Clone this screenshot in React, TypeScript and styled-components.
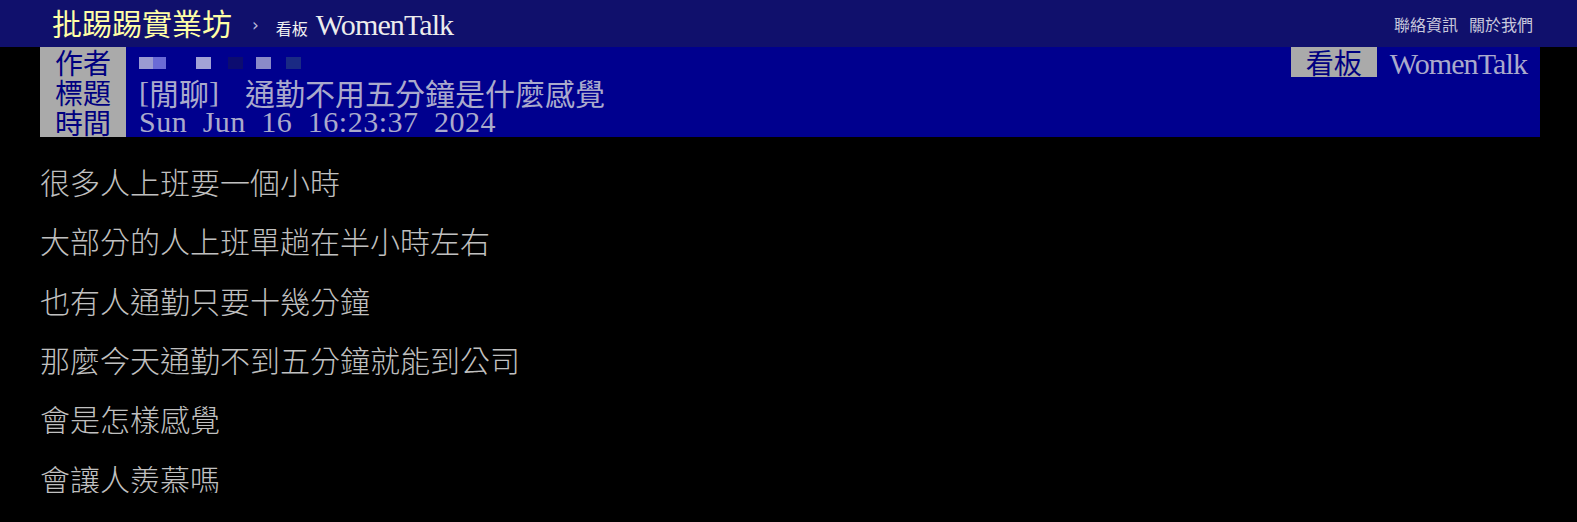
import styled, { createGlobalStyle } from "styled-components";

const CJK = `"Noto Sans CJK TC", "Noto Sans CJK SC", sans-serif`;
const SERIF = `"Liberation Serif", "Noto Sans CJK TC", serif`;

const GlobalStyle = createGlobalStyle`
  html, body {
    margin: 0;
    padding: 0;
    background: #000;
  }
  body {
    font-family: ${CJK};
  }
`;

const lines = [
  "很多人上班要一個小時",
  "大部分的人上班單趟在半小時左右",
  "也有人通勤只要十幾分鐘",
  "那麼今天通勤不到五分鐘就能到公司",
  "會是怎樣感覺",
  "會讓人羨慕嗎",
];

// mosaic over the author id
const blur = [
  { w: 14, c: "#9a9ad2", gap: 0 },
  { w: 13, c: "#6a6ad6", gap: 0 },
  { w: 15, c: "#a2a2d6", gap: 30 },
  { w: 15, c: "#0c0c70", gap: 17 },
  { w: 15, c: "#8a8ac8", gap: 13 },
  { w: 15, c: "#1a2a84", gap: 15 },
];

const App = () => {
  return (
    <>
      <GlobalStyle />
      <TopBar>
        <Brand>
          <Logo>批踢踢實業坊</Logo>
          <Arrow>›</Arrow>
          <BoardLabel>看板</BoardLabel>
          <Latin $size={30} $track={-0.9} $color="#ececec">WomenTalk</Latin>
        </Brand>
        <Links>
          <LinkItem>聯絡資訊</LinkItem>
          <LinkItem>關於我們</LinkItem>
        </Links>
      </TopBar>

      <Meta>
        <MetaRow>
          <Tag>作者</Tag>
          <Value>
            {blur.map((b, i) => (
              <Pixel key={i} $w={b.w} $c={b.c} $gap={b.gap} />
            ))}
          </Value>
          <Tag>看板</Tag>
          <BoardValue>
            <Latin $size={30} $track={-0.9}>WomenTalk</Latin>
          </BoardValue>
        </MetaRow>
        <MetaRow>
          <Tag>標題</Tag>
          <Value>
            <Latin $size={30}>[</Latin>閒聊<Latin $size={30} $track={5.5} $word={7.5}>] </Latin>
            通勤不用五分鐘是什麼感覺
          </Value>
        </MetaRow>
        <MetaRow>
          <Tag>時間</Tag>
          <Value>
            <Latin $size={30} $track={0.5} $word={7.5}>Sun Jun 16 16:23:37 2024</Latin>
          </Value>
        </MetaRow>
      </Meta>

      <Content>{"\n" + lines.join("\n\n")}</Content>
    </>
  );
};

const TopBar = styled.header`
  height: 47px;
  background: #10106c;
  display: flex;
  align-items: center;
  justify-content: space-between;
  padding: 0 44px 0 52px;
  box-sizing: border-box;
`;

const Brand = styled.div`
  display: flex;
  align-items: baseline;
`;

const Logo = styled.span`
  font-family: ${CJK};
  font-size: 30px;
  line-height: 47px;
  color: #ffffa6;
  margin-top: -3px;
`;

const Arrow = styled.span`
  font-family: "DejaVu Sans", sans-serif;
  font-size: 17px;
  color: #b8b8d8;
  margin: 0 17px 0 20px;
  position: relative;
  top: -4px;
`;

const BoardLabel = styled.span`
  font-family: ${CJK};
  font-size: 16px;
  color: #f0f0f0;
  margin-right: 8px;
`;

const Links = styled.nav`
  display: flex;
  gap: 11px;
`;

const LinkItem = styled.span`
  font-family: ${CJK};
  font-size: 16px;
  color: #c8c8dc;
  cursor: pointer;
`;

const Latin = styled.span<{ $size: number; $track?: number; $word?: number; $color?: string }>`
  font-family: ${SERIF};
  font-size: ${(p) => p.$size}px;
  letter-spacing: ${(p) => p.$track ?? 0}px;
  word-spacing: ${(p) => p.$word ?? 0}px;
  color: ${(p) => p.$color ?? "inherit"};
  white-space: pre;
`;

const Meta = styled.section`
  margin: 0 37px 0 40px;
  background: #00008e;
`;

const MetaRow = styled.div`
  display: flex;
  height: 30px;
  line-height: 30px;
  font-family: ${CJK};
  font-size: 28px;
  color: #aaaacc;
  white-space: nowrap;
`;

const Tag = styled.span`
  width: 86px;
  flex: none;
  background: #aaaaaa;
  color: #000080;
  text-align: center;
`;

const Value = styled.span`
  padding-left: 13px;
  flex: 1;
  font-size: 30px;
  display: flex;
  align-items: center;
`;

const Pixel = styled.span<{ $w: number; $c: string; $gap: number }>`
  display: inline-block;
  width: ${(p) => p.$w}px;
  height: 12px;
  margin-left: ${(p) => p.$gap}px;
  background: ${(p) => p.$c};
  position: relative;
  top: 1px;
`;

const BoardValue = styled.span`
  padding: 0 13px;
`;

const Content = styled.main`
  margin: 0;
  padding: 0 40px;
  font-family: ${CJK};
  font-weight: 300;
  font-size: 30px;
  line-height: 29.7px;
  color: #c0c0c0;
  white-space: pre-wrap;
`;

export default App;
